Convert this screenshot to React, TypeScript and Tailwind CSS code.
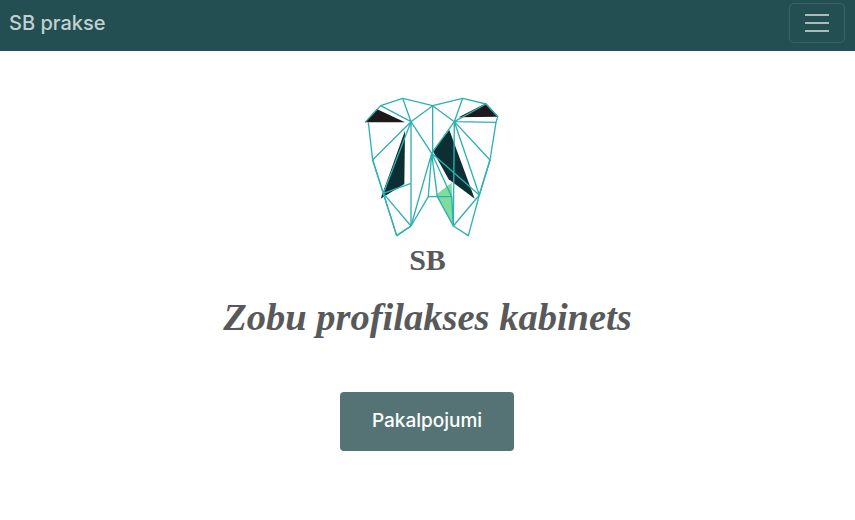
function ToothLogo() {
  const lines = [
    "M45 97L92 47L158 25L248 47L338 25L408 42L443 80L438 97L420 210L388 315L355 437L310 408L305 320L235 320L183 408L140 437L100 310L68 210L55 97",
    "M183 95L158 25M183 95L92 47M183 95L248 47M248 47L248 190M248 47L313 95M313 95L338 25M313 95L408 42M313 95L438 97",
    "M183 95L68 210M183 95L100 310M183 95L183 408M183 95L245 190M68 210L100 310M100 310L183 280M100 310L183 408M100 310L140 437",
    "M313 95L245 190M313 95L310 408M313 95L420 210M313 95L388 315M245 190L388 315M245 190L235 320M245 190L183 408M245 190L262 320L310 408M245 190L305 320",
    "M420 210L388 315M388 315L310 408M140 437L183 408",
  ];
  return (
    <svg width="160" height="155" viewBox="0 0 480 465" fill="none" className="block ml-[5px]">
      <path d="M45 97L80 57L165 97Z" fill="#1d1a1b" />
      <path d="M326 82L408 40L446 80Z" fill="#1d1a1b" />
      <path d="M165 122L163 282L92 326Z" fill="#0b2f33" />
      <path d="M298 120L374 326L296 268L248 182Z" fill="#0b2f33" />
      <path d="M258 314L305 278L310 408Z" fill="#7fdc9e" />
      {lines.map((d) => (
        <path key={d} d={d} stroke="#2fb0b4" strokeWidth="4" strokeLinejoin="round" />
      ))}
    </svg>
  );
}

export default function App() {
  return (
    <div className="min-h-[520px] bg-white font-['Inter',sans-serif]">
      {/* Navbar */}
      <nav className="h-[51px] bg-[#234e52] flex items-start justify-between pl-[9px] pr-[10px] pt-[3px]">
        <a href="#" className="text-[20px] leading-[40px] font-medium text-[#c3d0d1]">
          SB prakse
        </a>
        <button aria-label="Menu" className="w-[56px] h-[40px] rounded-[5px] border border-[#3c6265] flex flex-col items-center justify-center gap-[6px]">
          <span className="block w-[24px] h-[2px] bg-[#a9bcbd]" />
          <span className="block w-[24px] h-[2px] bg-[#a9bcbd]" />
          <span className="block w-[24px] h-[2px] bg-[#a9bcbd]" />
        </button>
      </nav>

      {/* Hero */}
      <main className="flex flex-col items-center pt-[39px]">
        <ToothLogo />
        <div className="mt-[-3px] text-[30px] leading-[36px] font-bold text-[#58595b] font-['Liberation_Serif',serif]">
          SB
        </div>
        <h1 className="mt-[14px] text-[38.5px] leading-[50px] font-bold italic text-[#58595b] font-['Liberation_Serif',serif]">
          Zobu profilakses kabinets
        </h1>
        <a href="#" className="mt-[50px] mr-[1px] w-[174px] h-[59px] rounded-[4px] bg-[#557375] flex items-center justify-center text-[19px] font-medium text-white">
          Pakalpojumi
        </a>
      </main>
    </div>
  );
}
